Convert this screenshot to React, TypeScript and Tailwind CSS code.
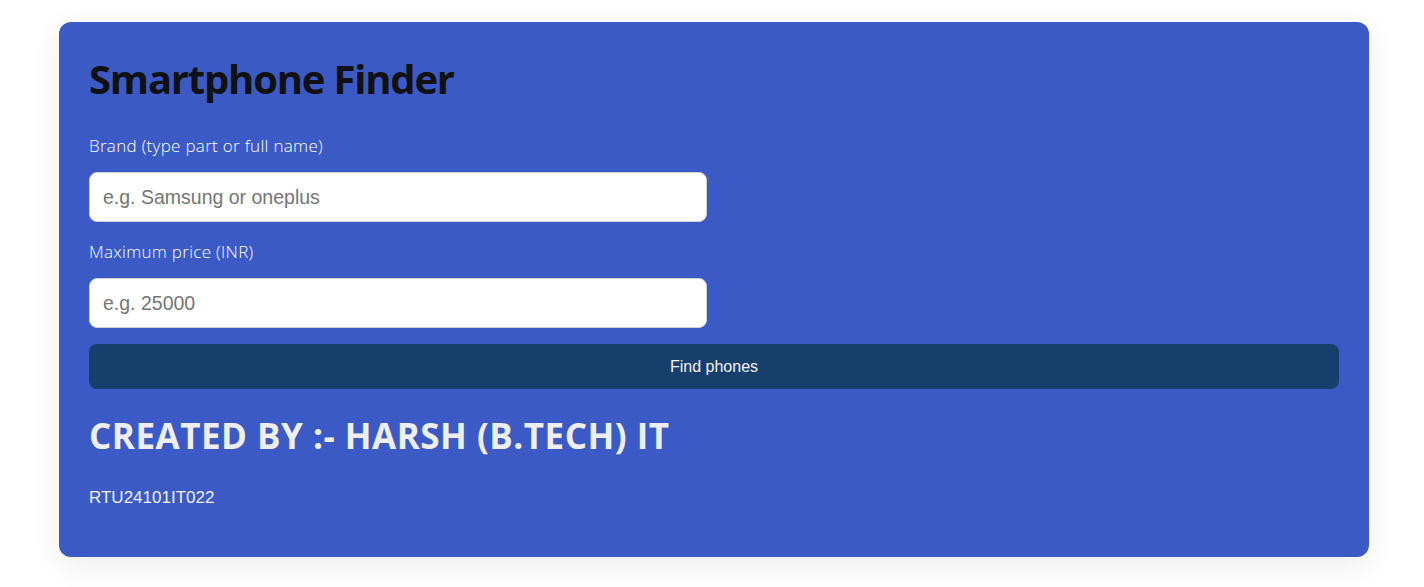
import React from "react";

const App = () => {
  return (
    <div className="min-h-[587px] bg-white pt-[22px] pl-[59px]">
      <div className="w-[1310px] rounded-[12px] bg-[#3b5ac5] px-[30px] pt-[32px] pb-[49px] shadow-[0_8px_30px_rgba(0,0,0,0.08)]">
        <h1 className="font-['Open_Sans',sans-serif] text-[40px] leading-[50px] font-bold tracking-[-1.2px] text-[#111]">
          Smartphone Finder
        </h1>

        <label className="mt-[32px] block font-['Open_Sans',sans-serif] text-[17px] leading-[20px] font-light tracking-[0.3px] text-white">
          Brand (type part or full name)
        </label>
        <input
          className="mt-[16px] block h-[50px] w-[618px] rounded-[8px] border border-[#d0d0d0] bg-white px-[13px] font-['Liberation_Sans',Arial,sans-serif] text-[19.5px] text-[#222] placeholder:text-[#757575] outline-none"
          placeholder="e.g. Samsung or oneplus"
        />

        <label className="mt-[20px] block font-['Open_Sans',sans-serif] text-[17px] leading-[20px] font-light tracking-[0.3px] text-white">
          Maximum price (INR)
        </label>
        <input
          className="mt-[16px] block h-[50px] w-[618px] rounded-[8px] border border-[#d0d0d0] bg-white px-[13px] font-['Liberation_Sans',Arial,sans-serif] text-[19.5px] text-[#222] placeholder:text-[#757575] outline-none"
          placeholder="e.g. 25000"
        />

        <button className="mt-[16px] block h-[45px] w-full rounded-[8px] bg-[#173f6b] font-['Liberation_Sans',Arial,sans-serif] text-[16px] text-[#f2f2f2]">
          Find phones
        </button>

        <h2 className="mt-[26px] font-['Open_Sans',sans-serif] text-[35px] leading-[42px] font-bold tracking-[0.5px] text-[#eeeeee]">
          CREATED BY :- HARSH (B.TECH) IT
        </h2>

        <p className="mt-[31px] font-['Liberation_Sans',Arial,sans-serif] text-[17px] leading-[20px] text-[#f0f0f0]">
          RTU24101IT022
        </p>
      </div>
    </div>
  );
};

export default App;
